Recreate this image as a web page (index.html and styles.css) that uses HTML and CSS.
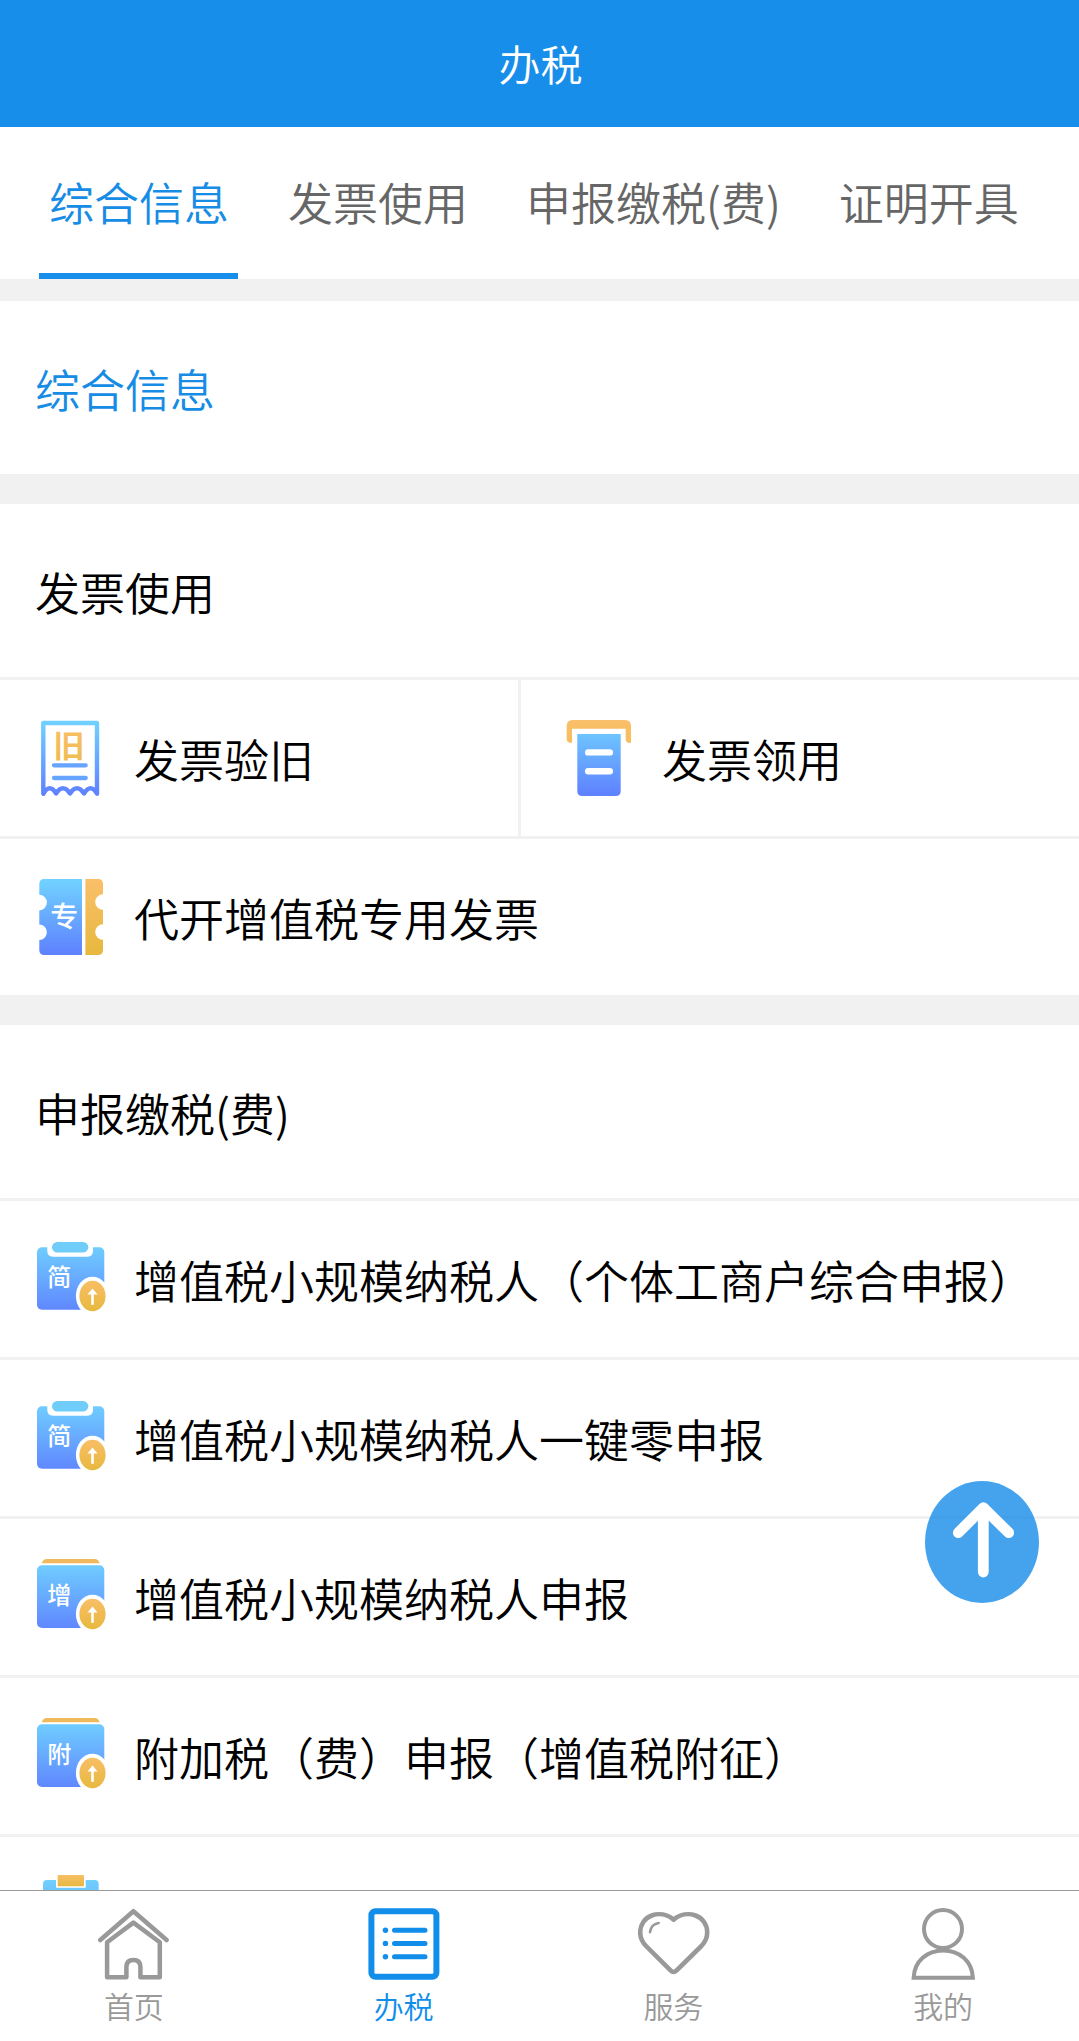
FILE: index.html
```html
<!DOCTYPE html>
<html lang="zh-CN">
<head>
    <meta charset="UTF-8">
    <meta name="viewport" content="width=device-width, initial-scale=1.0">
    <title>办税</title>
    <link rel="stylesheet" href="styles.css">
</head>
<body>
    <!-- shared gradients and icons -->
    <svg class="defs" width="0" height="0">
        <defs>
            <linearGradient id="blue" gradientUnits="userSpaceOnUse" x1="0" y1="5" x2="0" y2="76">
                <stop offset="0" stop-color="#70d0ff"/>
                <stop offset="1" stop-color="#5f82ff"/>
            </linearGradient>
            <linearGradient id="gold" gradientUnits="userSpaceOnUse" x1="0" y1="3" x2="0" y2="76">
                <stop offset="0" stop-color="#fabf69"/>
                <stop offset="1" stop-color="#e7b93f"/>
            </linearGradient>
            <linearGradient id="coin" x1="0" y1="0" x2="0" y2="1">
                <stop offset="0" stop-color="#f8be66"/>
                <stop offset="1" stop-color="#e7b93f"/>
            </linearGradient>
            <symbol id="upload" viewBox="0 0 72 80">
                <ellipse cx="56.5" cy="57" rx="16.6" ry="19.3" fill="#fff"/>
                <ellipse cx="56.5" cy="57" rx="13.1" ry="15.3" fill="url(#coin)"/>
                <path d="M56.5 65.8V54" stroke="#fff" stroke-width="2.6" fill="none"/>
                <path d="M51.5 55.5L56.5 49.5L61.5 55.5Z" fill="#fff"/>
            </symbol>
            <symbol id="clipboard" viewBox="0 0 72 80">
                <rect x="1" y="8.3" width="67.3" height="62.4" rx="5" fill="url(#blue)"/>
                <path d="M11.3 8V12Q11.3 17.7 17 17.7H51.3Q57 17.7 57 12V8Z" fill="#fff"/>
                <rect x="16" y="3" width="36.3" height="10.6" rx="5.3" fill="#70ccf8"/>
            </symbol>
            <symbol id="book" viewBox="0 0 72 80">
                <path d="M5.7 6.3Q7 2 11 2H58.4Q62.4 2 63.7 6.3Z" fill="#efb95c"/>
                <rect x="1" y="8.3" width="67.3" height="62.7" rx="5" fill="url(#blue)"/>
            </symbol>
        </defs>
    </svg>

    <div class="page">
        <header class="header">办税</header>
        <nav class="tabs">
            <a class="tab active">综合信息</a>
            <a class="tab">发票使用</a>
            <a class="tab">申报缴税(费)</a>
            <a class="tab">证明开具</a>
        </nav>

        <main class="content">
            <section class="section">
                <h2 class="section-title current">综合信息</h2>
            </section>

            <section class="section">
                <h2 class="section-title">发票使用</h2>
                <div class="row split">
                    <div class="item">
                        <svg class="icon" viewBox="0 0 72 80">
                            <path d="M7.3 75.8V5H61V75.8C57 68.5 52.5 68.5 48 75.5C43.5 68.5 38.5 68.5 34 75.5C29.5 68.5 24.5 68.5 20 75.5C16 68.5 11.5 68.5 7.3 75.8Z" fill="none" stroke="url(#blue)" stroke-width="4.4" stroke-linejoin="round"/>
                            <text class="stamp" x="33" y="38.5" fill="url(#gold)">旧</text>
                            <path d="M18 47.3H49.7M18 60H49.7" stroke="#66a4ff" stroke-width="4.3" stroke-linecap="round"/>
                        </svg>
                        <span class="label">发票验旧</span>
                    </div>
                    <div class="item">
                        <svg class="icon" viewBox="0 0 72 80">
                            <path d="M2.7 24.7V8Q2.7 2 8.7 2H61Q67 2 67 8V24.7H65Q61.7 24.7 61.7 21V10.7H8V24.7H6Q2.7 24 2.7 21Z" fill="url(#gold)"/>
                            <path d="M13.3 16H56.7V73Q56.7 78 51.7 78H18.3Q13.3 78 13.3 73Z" fill="url(#blue)"/>
                            <path d="M24.2 34.4H45.8M24.2 53.2H45.8" stroke="#fff" stroke-width="6.4" stroke-linecap="round"/>
                        </svg>
                        <span class="label">发票领用</span>
                    </div>
                </div>
                <div class="row">
                    <div class="item">
                        <svg class="icon" viewBox="0 0 72 80">
                            <path d="M8.3 2H46V78H8.3Q3.3 78 3.3 73V63A7.6 7.8 0 0 0 3.3 47.4V33.4A7.6 7.8 0 0 0 3.3 17.8V7Q3.3 2 8.3 2Z" fill="url(#blue)"/>
                            <path d="M49.4 2H62Q67 2 67 7V17.2A7.8 7.8 0 0 0 67 32.8V47.2A7.8 7.8 0 0 0 67 62.8V73Q67 78 62 78H49.4Z" fill="url(#gold)"/>
                            <text class="ticket" x="28.3" y="50">专</text>
                        </svg>
                        <span class="label">代开增值税专用发票</span>
                    </div>
                </div>
            </section>

            <section class="section">
                <h2 class="section-title">申报缴税(费)</h2>
                <div class="row">
                    <div class="item">
                        <svg class="icon" viewBox="0 0 72 80">
                            <use href="#clipboard"/>
                            <text class="mark" x="23.3" y="47">简</text>
                            <use href="#upload"/>
                        </svg>
                        <span class="label">增值税小规模纳税人（个体工商户综合申报）</span>
                    </div>
                </div>
                <div class="row">
                    <div class="item">
                        <svg class="icon" viewBox="0 0 72 80">
                            <use href="#clipboard"/>
                            <text class="mark" x="23.3" y="47">简</text>
                            <use href="#upload"/>
                        </svg>
                        <span class="label">增值税小规模纳税人一键零申报</span>
                    </div>
                </div>
                <div class="row">
                    <div class="item">
                        <svg class="icon" viewBox="0 0 72 80">
                            <use href="#book"/>
                            <text class="mark" x="23.3" y="47">增</text>
                            <use href="#upload"/>
                        </svg>
                        <span class="label">增值税小规模纳税人申报</span>
                    </div>
                </div>
                <div class="row">
                    <div class="item">
                        <svg class="icon" viewBox="0 0 72 80">
                            <use href="#book"/>
                            <text class="mark" x="23.3" y="47">附</text>
                            <use href="#upload"/>
                        </svg>
                        <span class="label">附加税（费）申报（增值税附征）</span>
                    </div>
                </div>
                <div class="row">
                    <div class="item">
                        <svg class="icon" viewBox="0 0 72 80">
                            <rect x="7" y="5" width="55.7" height="70" rx="4" fill="url(#blue)"/>
                            <rect x="20" y="0" width="29.7" height="12.8" fill="#fff"/>
                            <rect x="21.7" y="0" width="26.3" height="11.3" rx="1" fill="url(#coin)"/>
                        </svg>
                    </div>
                </div>
            </section>
        </main>

        <nav class="tabbar">
            <a class="tabbar-item">
                <svg class="tabbar-icon" viewBox="0 0 72 72">
                    <path d="M2.3 32L35.4 3.2L68.6 32" stroke-width="4.5"/>
                    <path d="M9.1 69.3V34.3L35.4 14.6L61.8 34.3V69.3H42.4V59Q42.4 52 35.4 52Q28.4 52 28.4 59V69.3Z" stroke-width="4.5"/>
                </svg>
                <span>首页</span>
            </a>
            <a class="tabbar-item active">
                <svg class="tabbar-icon" viewBox="0 0 72 72">
                    <rect x="3.4" y="3.3" width="65" height="65.4" rx="4" stroke-width="6"/>
                    <path d="M26.5 22.3H57M26.5 35.6H57M26.5 48.7H57" stroke-width="5"/>
                    <path d="M17.4 22.3H17.5M17.4 35.4H17.5M17.4 48.7H17.5" stroke-width="5.4"/>
                </svg>
                <span>办税</span>
            </a>
            <a class="tabbar-item">
                <svg class="tabbar-icon" viewBox="0 0 72 72">
                    <path d="M35.6 11.6C22 .5 2.2 7.5 2.2 24.5Q2.2 32 8 38L32.8 62.6Q35.6 65.4 38.4 62.6L63.4 38Q69.2 32 69.2 24.5C69.2 7.5 49.2 .5 35.6 11.6Z" stroke-width="4.6"/>
                    <path d="M12 24.2Q13 16.2 20.6 15" stroke-width="2.6"/>
                </svg>
                <span>服务</span>
            </a>
            <a class="tabbar-item">
                <svg class="tabbar-icon" viewBox="0 0 72 72">
                    <circle cx="35" cy="21" r="19"/>
                    <path d="M5.6 69.8C6.5 53 19 42.5 35.2 42.5S64 53 64.9 69.8Z" stroke-linejoin="miter"/>
                </svg>
                <span>我的</span>
            </a>
        </nav>

        <a class="back-top">
            <svg width="114" height="122" viewBox="0 0 114 122">
                <path d="M58.3 91V27M33.3 51.7L58.3 26.7L83.7 51.7" fill="none" stroke="#fff" stroke-width="10.8" stroke-linecap="round" stroke-linejoin="round"/>
            </svg>
        </a>
    </div>
</body>
</html>
```

FILE: styles.css
```css
body {
    margin: 0;
    font-family: "Noto Sans CJK SC", sans-serif;
    font-size: 45px;
    font-weight: 350;
    color: #000;
    background-color: #f1f1f1;
}
.defs {
    position: absolute;
}
.page {
    position: relative;
    display: flex;
    flex-direction: column;
    height: 100vh;
    overflow: hidden;
}
.header {
    flex: none;
    height: 127px;
    padding-left: 2px;
    line-height: 126px;
    font-size: 42px;
    text-align: center;
    color: #fff;
    background-color: #178eea;
}
.tabs {
    flex: none;
    display: flex;
    gap: 42px;
    height: 152px;
    padding-left: 39px;
    background-color: #fff;
}
.tab {
    box-sizing: border-box;
    height: 152px;
    padding: 0 8px;
    line-height: 150px;
    white-space: nowrap;
    color: #666;
}
.tab.active {
    padding: 0 9px 0 10px;
    color: #178ce4;
    border-bottom: 6px solid #178eea;
}
.content {
    flex: 1;
    min-height: 0;
    padding-top: 22px;
    overflow: hidden;
}
.section {
    margin-bottom: 30px;
    background-color: #fff;
}
.section-title {
    height: 173px;
    margin: 0;
    padding: 0 35px;
    line-height: 175px;
    font-size: 45px;
    font-weight: 350;
}
.section-title.current {
    color: #178ce4;
}
.row {
    display: flex;
    height: 156px;
    border-top: 3px solid #f1f1f1;
}
.item {
    display: flex;
    align-items: center;
    padding-left: 36px;
}
.split .item:first-child {
    box-sizing: border-box;
    width: 521px;
    border-right: 3px solid #f1f1f1;
}
.split .item:last-child {
    padding-left: 43px;
}
.icon {
    flex: none;
    width: 72px;
    height: 80px;
    margin-right: 26px;
}
.icon text {
    text-anchor: middle;
}
.stamp {
    font-size: 31px;
    font-weight: 700;
}
.ticket {
    font-size: 28px;
    font-weight: 500;
    fill: #fff;
}
.mark {
    font-size: 24px;
    font-weight: 500;
    fill: #fff;
}
.label {
    padding-top: 2px;
    line-height: 60px;
    white-space: nowrap;
}
.tabbar {
    flex: none;
    display: flex;
    height: 150px;
    border-top: 1px solid #999;
    background-color: #fff;
}
.tabbar-item {
    flex: 1;
    display: flex;
    flex-direction: column;
    align-items: center;
    padding: 17px 1px 0 0;
    font-size: 30px;
    line-height: 51px;
    color: #999;
}
.tabbar-item.active {
    color: #118eea;
}
.tabbar-icon {
    width: 72px;
    height: 72px;
    fill: none;
    stroke: currentColor;
    stroke-width: 4;
    stroke-linecap: round;
    stroke-linejoin: round;
}
.tabbar-item span {
    margin-right: 1px;
}
.back-top {
    position: absolute;
    top: 1481px;
    right: 40px;
    width: 114px;
    height: 122px;
    border-radius: 50%;
    background-color: rgba(23, 140, 234, 0.8);
}
```
